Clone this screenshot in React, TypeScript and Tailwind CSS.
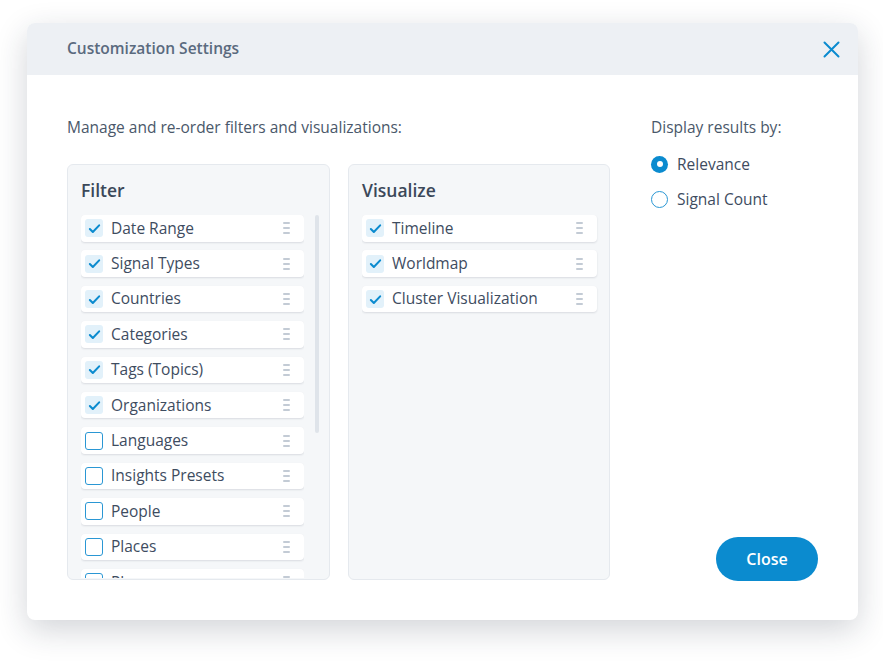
const filters = [
  { label: "Date Range", on: true },
  { label: "Signal Types", on: true },
  { label: "Countries", on: true },
  { label: "Categories", on: true },
  { label: "Tags (Topics)", on: true },
  { label: "Organizations", on: true },
  { label: "Languages", on: false },
  { label: "Insights Presets", on: false },
  { label: "People", on: false },
  { label: "Places", on: false },
  { label: "Places", on: false },
];

const visuals = [
  { label: "Timeline", on: true },
  { label: "Worldmap", on: true },
  { label: "Cluster Visualization", on: true },
];

function Check({ on }: { on: boolean }) {
  if (on) {
    return (
      <span className="flex h-[18px] w-[18px] shrink-0 items-center justify-center rounded-[3px] bg-[#e2f1fa]">
        <svg width="13" height="13" viewBox="0 0 14 14" fill="none">
          <path d="M2 7.5l3.2 3.2L12 3.6" stroke="#0b8bcf" strokeWidth="2.2" strokeLinecap="round" strokeLinejoin="round" />
        </svg>
      </span>
    );
  }
  return <span className="h-[18px] w-[18px] shrink-0 rounded-[3px] border-[1.5px] border-[#2a97d4] bg-white" />;
}

function Handle() {
  return (
    <span className="flex flex-col gap-[3px]">
      <span className="block h-[2px] w-[7px] rounded bg-[#c3cbd5]" />
      <span className="block h-[2px] w-[7px] rounded bg-[#c3cbd5]" />
      <span className="block h-[2px] w-[7px] rounded bg-[#c3cbd5]" />
    </span>
  );
}

function Item({ label, on }: { label: string; on: boolean }) {
  return (
    <div className="flex h-[26.5px] shrink-0 items-center rounded-[4px] bg-white pl-[4px] pr-[14px] shadow-[0_1px_2px_rgba(40,55,75,0.14)]">
      <Check on={on} />
      <span className="ml-[8px] flex-1 text-[15.5px] text-[#3e4c5f]">{label}</span>
      <Handle />
    </div>
  );
}

function Panel({ title, items, scroll }: { title: string; items: typeof filters; scroll?: boolean }) {
  return (
    <div className="flex h-[416px] flex-col rounded-[6px] border border-[#e5e9ee] bg-[#f5f7f9] pl-[13px]">
      <h3 className="mt-[13px] text-[17.5px] font-semibold leading-6 text-[#3b4859]">{title}</h3>
      <div className="mt-[13px] flex min-h-0 flex-1 pb-[1px]">
        <div className={`flex flex-1 flex-col gap-[8.9px] overflow-hidden ${scroll ? "" : "pr-[12px]"}`}>
          {items.map((it, i) => (
            <Item key={i} label={it.label} on={it.on} />
          ))}
        </div>
        {scroll && (
          <div className="ml-[11px] mr-[10px] w-[4px]">
            <div className="h-[218px] rounded-full bg-[#dfe4ea]" />
          </div>
        )}
      </div>
    </div>
  );
}

function Radio({ label, on }: { label: string; on: boolean }) {
  return (
    <div className="flex items-center gap-[9px]">
      {on ? (
        <span className="flex h-[17px] w-[17px] items-center justify-center rounded-full bg-[#0b8bcf]">
          <span className="h-[6px] w-[6px] rounded-full bg-white" />
        </span>
      ) : (
        <span className="h-[17px] w-[17px] rounded-full border-[1.5px] border-[#2a97d4] bg-white" />
      )}
      <span className="text-[15.5px] leading-[22px] text-[#3e4c5f]">{label}</span>
    </div>
  );
}

export default function App() {
  return (
    <div className="min-h-[662px] bg-white pl-[27px] pt-[23px] font-['Open_Sans',sans-serif]">
      <div className="w-[831px] overflow-hidden rounded-[8px] bg-white shadow-[0_10px_32px_rgba(30,42,60,0.2)]">
        <div className="flex h-[52px] items-center justify-between bg-[#edf0f4] pl-[40px] pr-[15px]">
          <h2 className="text-[15.5px] font-semibold text-[#5a6a7e]">Customization Settings</h2>
          <button className="flex h-[24px] w-[24px] items-center justify-center">
            <svg width="17" height="17" viewBox="0 0 17 17" fill="none">
              <path d="M1.5 1.5l14 14M15.5 1.5l-14 14" stroke="#0b8bcf" strokeWidth="2" strokeLinecap="round" />
            </svg>
          </button>
        </div>
        <div className="flex px-[40px] pb-[40px] pt-[40px]">
          <div className="w-[543px]">
            <p className="text-[15.5px] leading-6 text-[#4a586a]">Manage and re-order filters and visualizations:</p>
            <div className="mt-[25px] grid grid-cols-[263px_262px] gap-[18px]">
              <Panel title="Filter" items={filters} scroll />
              <Panel title="Visualize" items={visuals} />
            </div>
          </div>
          <div className="ml-[41px] flex flex-1 flex-col">
            <p className="text-[15.5px] leading-6 text-[#4a586a]">Display results by:</p>
            <div className="mt-[14px] flex flex-col gap-[13px]">
              <Radio label="Relevance" on />
              <Radio label="Signal Count" on={false} />
            </div>
            <div className="mt-auto flex justify-end">
              <button className="mb-[-1px] h-[44px] w-[102px] rounded-full bg-[#0b8bcf] text-[16px] font-semibold text-white">
                Close
              </button>
            </div>
          </div>
        </div>
      </div>
    </div>
  );
}
